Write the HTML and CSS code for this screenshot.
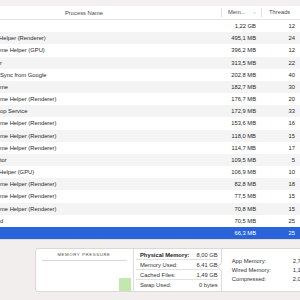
FILE: index.html
```html
<!DOCTYPE html>
<html lang="en">
<head>
    <meta charset="UTF-8">
    <title>Activity Monitor - Memory</title>
    <link rel="stylesheet" href="styles.css">
</head>
<body>
    <div class="toolbar-edge"></div>

    <!-- Process table -->
    <div class="table">
        <div class="row head">
            <div class="cell name">Process Name</div>
            <div class="cell mem">Mem...
                <svg class="chev" width="5" height="4" viewBox="0 0 5 4"><polyline points="0.5,0.8 2.5,2.8 4.5,0.8" fill="none" stroke="#9a9a9a" stroke-width="0.7"/></svg>
            </div>
            <div class="cell threads">Threads</div>
        </div>
        <div class="row"><div class="cell name"></div><div class="cell mem">1,22 GB</div><div class="cell threads">12</div></div>
        <div class="row"><div class="cell name cut">Helper (Renderer)</div><div class="cell mem">495,1 MB</div><div class="cell threads">24</div></div>
        <div class="row"><div class="cell name">me Helper (GPU)</div><div class="cell mem">396,2 MB</div><div class="cell threads">12</div></div>
        <div class="row"><div class="cell name">r</div><div class="cell mem">313,5 MB</div><div class="cell threads">22</div></div>
        <div class="row"><div class="cell name">Sync from Google</div><div class="cell mem">202,8 MB</div><div class="cell threads">40</div></div>
        <div class="row"><div class="cell name">me</div><div class="cell mem">182,7 MB</div><div class="cell threads">30</div></div>
        <div class="row"><div class="cell name">me Helper (Renderer)</div><div class="cell mem">176,7 MB</div><div class="cell threads">20</div></div>
        <div class="row"><div class="cell name">op Service</div><div class="cell mem">172,9 MB</div><div class="cell threads">33</div></div>
        <div class="row"><div class="cell name">me Helper (Renderer)</div><div class="cell mem">153,6 MB</div><div class="cell threads">16</div></div>
        <div class="row"><div class="cell name">me Helper (Renderer)</div><div class="cell mem">118,0 MB</div><div class="cell threads">15</div></div>
        <div class="row"><div class="cell name">me Helper (Renderer)</div><div class="cell mem">114,7 MB</div><div class="cell threads">17</div></div>
        <div class="row"><div class="cell name">tor</div><div class="cell mem">109,5 MB</div><div class="cell threads">5</div></div>
        <div class="row"><div class="cell name cut">Helper (GPU)</div><div class="cell mem">106,9 MB</div><div class="cell threads">10</div></div>
        <div class="row"><div class="cell name">me Helper (Renderer)</div><div class="cell mem">82,8 MB</div><div class="cell threads">18</div></div>
        <div class="row"><div class="cell name">me Helper (Renderer)</div><div class="cell mem">77,5 MB</div><div class="cell threads">15</div></div>
        <div class="row"><div class="cell name">me Helper (Renderer)</div><div class="cell mem">70,8 MB</div><div class="cell threads">15</div></div>
        <div class="row"><div class="cell name">d</div><div class="cell mem">70,5 MB</div><div class="cell threads">25</div></div>
        <div class="row selected"><div class="cell name"></div><div class="cell mem">66,3 MB</div><div class="cell threads">25</div></div>
    </div>

    <!-- Memory summary -->
    <div class="summary">
        <div class="card">
            <div class="pressure">
                <div class="pressure-title">MEMORY PRESSURE</div>
                <div class="graph"><div class="bar"></div></div>
            </div>
            <div class="stats">
                <div class="stat strong"><span>Physical Memory:</span><span>8,00 GB</span></div>
                <div class="stat"><span>Memory Used:</span><span>6,41 GB</span></div>
                <div class="stat"><span>Cached Files:</span><span>1,49 GB</span></div>
                <div class="stat last"><span>Swap Used:</span><span>0 bytes</span></div>
            </div>
            <div class="breakdown">
                <div class="item"><span class="label">App Memory:</span><span class="value">2,76 GB</span></div>
                <div class="item"><span class="label">Wired Memory:</span><span class="value">1,14 GB</span></div>
                <div class="item"><span class="label">Compressed:</span><span class="value">2,08 GB</span></div>
            </div>
        </div>
    </div>
</body>
</html>
```

FILE: styles.css
```css
body {
    margin: 0;
    width: 300px;
    height: 300px;
    overflow: hidden;
    font-family: "Liberation Sans", Arial, sans-serif;
    font-size: 5.8px;
    color: #262626;
    background: #fff;
}
/* thin strip of the window toolbar above the table */
.toolbar-edge {
    height: 6px;
    background: #f4f0f1;
}
.table {
    border-bottom: 1px solid #dedada;
}
.row {
    display: grid;
    grid-template-columns: 221px 40px 39px;
    height: 12.18px;
    align-items: center;
    white-space: nowrap;
}
.row:nth-child(odd) {
    background: #f4f4f5;
}
.row.head {
    height: 13px;
    background: #fff;
    color: #4a4a4a;
    border-bottom: 1px solid #e4e4e4;
}
.row.selected {
    background: #2b63d8;
    color: #fff;
}
.cell {
    overflow: hidden;
}
.name {
    padding-left: 0;
}
.name.cut {
    margin-left: -1px;
}
.mem,
.threads {
    text-align: right;
    padding-right: 5px;
}
.head .name {
    padding-left: 65px;
}
.head .mem,
.head .threads {
    text-align: left;
    border-left: 1px solid #e2e2e2;
    height: 9px;
    line-height: 9px;
}
.head .mem {
    padding-left: 6px;
    display: flex;
    align-items: center;
    gap: 7px;
}
.head .threads {
    padding-left: 7px;
}
.chev {
    display: block;
}
/* bottom memory panel */
.summary {
    height: 60px;
    background: #f2eeee;
    padding: 8px 0 0 35px;
    box-sizing: border-box;
}
.card {
    display: flex;
    height: 44px;
    width: 280px;
    background: #fff;
    border: 1px solid #dcd8d8;
    border-radius: 3px;
    box-sizing: border-box;
}
.pressure {
    width: 96px;
    display: flex;
    flex-direction: column;
    align-items: center;
}
.pressure-title {
    margin-top: 3px;
    font-size: 4.4px;
    letter-spacing: 0.55px;
    color: #555;
    width: 85px;
    text-align: center;
    padding-bottom: 3px;
    border-bottom: 1px solid #d6d6d6;
}
.graph {
    flex: 1;
    width: 96px;
    display: flex;
    justify-content: flex-end;
    align-items: flex-end;
}
.bar {
    width: 12px;
    height: 13px;
    background: #c1e8b0;
    margin-right: 1px;
}
.stats {
    width: 92px;
    border-left: 1px solid #e0dcdc;
    margin-left: 1px;
    padding: 1px 3px 0 2px;
}
.stat {
    display: flex;
    justify-content: space-between;
    height: 10px;
    line-height: 10px;
    padding: 0 0 0 4px;
    border-bottom: 1px solid #e2e2e2;
    box-sizing: border-box;
    color: #333;
}
.stat.strong span:first-child {
    font-weight: bold;
    color: #222;
}
.stat.last {
    border-bottom: none;
}
.breakdown {
    position: relative;
    flex: 1;
    border-left: 1px solid #dcdcdc;
    display: flex;
    flex-direction: column;
    justify-content: center;
    padding-left: 10px;
    color: #333;
}
/* the notch pointing at "Memory Used" */
.breakdown::before {
    content: "";
    position: absolute;
    left: -3.5px;
    top: 14.5px;
    width: 5px;
    height: 5px;
    background: #fff;
    border-left: 1px solid #dcdcdc;
    border-bottom: 1px solid #dcdcdc;
    transform: rotate(45deg);
}
.item {
    display: flex;
    height: 9px;
    line-height: 9px;
    white-space: nowrap;
}
.item .label {
    flex: none;
    width: 61px;
}
.item .value {
    flex: none;
}
```
